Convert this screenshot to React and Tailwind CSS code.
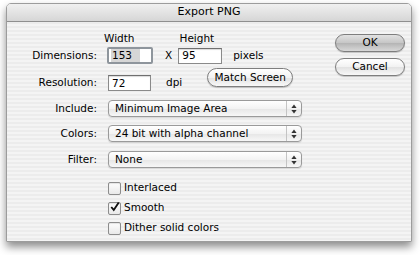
import React from "react";

const font = { fontFamily: '"DejaVu Sans", "Liberation Sans", sans-serif' };

function TextBox({ value, focused, width }) {
  if (focused) {
    return (
      <div className={`${width} h-[17px] rounded-[2px] border-[2px] border-[#8e959c] bg-white flex items-center`}>
        <span className="ml-[2px] bg-[#d6d6d6] pl-[1px] pr-[8px] leading-[13px]">{value}</span>
      </div>
    );
  }
  return (
    <div className={`${width} h-[16px] border border-[#8a8a8a] border-t-[#6f6f6f] bg-white shadow-[inset_0_1px_1px_rgba(0,0,0,0.15)] flex items-center pl-[3px] leading-none`}>
      {value}
    </div>
  );
}

function Popup({ value }) {
  return (
    <div className="w-[194px] h-[17px] rounded-[4px] border border-[#9a9a9a] bg-[linear-gradient(to_bottom,#ffffff,#f3f3f3_50%,#e6e6e6_51%,#f7f7f7)] shadow-[0_1px_1px_rgba(0,0,0,0.12)] flex items-center">
      <span className="flex-1 pl-[6px] leading-none">{value}</span>
      <div className="w-[15px] h-full border-l border-[#c4c4c4] flex flex-col items-center justify-center">
        <svg width="6" height="10" viewBox="0 0 6 10">
          <path d="M3 0.5 L5.6 4 L0.4 4 Z" fill="#333" />
          <path d="M3 9.5 L5.6 6 L0.4 6 Z" fill="#333" />
        </svg>
      </div>
    </div>
  );
}

function Check({ label, checked }) {
  return (
    <div className="flex items-center h-[20px]">
      <div className="w-[13px] h-[13px] rounded-[2px] border border-[#8c8c8c] bg-[linear-gradient(to_bottom,#fdfdfd,#e9e9e9)] shadow-[inset_0_1px_1px_rgba(0,0,0,0.1)] flex items-center justify-center">
        {checked && (
          <svg width="12" height="12" viewBox="0 0 12 12" className="-mt-[3px] ml-[1px]">
            <path d="M1.5 6 L4.5 9.5 L10.5 0.5" stroke="#111" strokeWidth="2.2" fill="none" />
          </svg>
        )}
      </div>
      <span className="ml-[3px]">{label}</span>
    </div>
  );
}

function PillButton({ children, main, width, height }) {
  return (
    <div
      className={`${width} ${height} rounded-full border border-[#7e7e7e] flex items-center justify-center shadow-[0_1px_1px_rgba(0,0,0,0.2)] ${
        main
          ? "bg-[linear-gradient(to_bottom,#e2e2e2,#c6c6c6_50%,#b4b4b4_51%,#d8d8d8)]"
          : "bg-[linear-gradient(to_bottom,#ffffff,#f2f2f2_50%,#e2e2e2_51%,#f8f8f8)]"
      }`}
    >
      {children}
    </div>
  );
}

export default function App() {
  return (
    <div className="w-[420px] h-[255px] bg-white overflow-hidden pt-[3px] pl-[6px] text-[10.5px] text-black" style={font}>
      <div className="w-[406px] h-[239px] rounded-t-[5px] border border-[#9c9c9c] shadow-[0_5px_8px_rgba(0,0,0,0.45)] flex flex-col overflow-hidden">
        <div className="h-[18px] shrink-0 bg-[linear-gradient(to_bottom,#f0f0f0,#d6d6d6)] border-b border-[#8f8f8f] flex items-center justify-center text-[11px]">
          Export PNG
        </div>
        <div className="flex-1 flex bg-[repeating-linear-gradient(to_bottom,#ececec_0px,#ececec_2px,#f4f4f4_2px,#f4f4f4_4px)]">
          <div className="w-[318px] flex flex-col">
            <div className="flex h-[14px] mt-[10px] items-center">
              <span className="ml-[97px]">Width</span>
              <span className="ml-[45px]">Height</span>
            </div>
            <div className="flex items-center mt-[1px] h-[17px]">
              <span className="w-[90px] text-right">Dimensions:</span>
              <div className="ml-[10px]">
                <TextBox value="153" focused width="w-[46px]" />
              </div>
              <span className="ml-[12px]">X</span>
              <div className="ml-[6px]">
                <TextBox value="95" width="w-[44px]" />
              </div>
              <span className="ml-[11px]">pixels</span>
            </div>
            <div className="flex items-end mt-[4px] h-[23px]">
              <div className="flex items-center h-[16px]">
                <span className="w-[90px] text-right">Resolution:</span>
                <div className="ml-[11px]">
                  <TextBox value="72" width="w-[43px]" />
                </div>
                <span className="ml-[15px]">dpi</span>
              </div>
              <div className="ml-[25px] mb-[4px]">
                <PillButton width="w-[86px]" height="h-[19px]">Match Screen</PillButton>
              </div>
            </div>
            <div className="flex items-center mt-[9px] h-[17px]">
              <span className="w-[90px] text-right">Include:</span>
              <div className="ml-[11px]">
                <Popup value="Minimum Image Area" />
              </div>
            </div>
            <div className="flex items-center mt-[8px] h-[17px]">
              <span className="w-[90px] text-right">Colors:</span>
              <div className="ml-[11px]">
                <Popup value="24 bit with alpha channel" />
              </div>
            </div>
            <div className="flex items-center mt-[9px] h-[17px]">
              <span className="w-[90px] text-right">Filter:</span>
              <div className="ml-[11px]">
                <Popup value="None" />
              </div>
            </div>
            <div className="flex flex-col ml-[101px] mt-[10px]">
              <Check label="Interlaced" />
              <Check label="Smooth" checked />
              <Check label="Dither solid colors" />
            </div>
          </div>
          <div className="flex flex-col ml-[10px] mt-[12px]">
            <PillButton main width="w-[70px]" height="h-[18px]">OK</PillButton>
            <div className="mt-[6px]">
              <PillButton width="w-[70px]" height="h-[18px]">Cancel</PillButton>
            </div>
          </div>
        </div>
      </div>
    </div>
  );
}
